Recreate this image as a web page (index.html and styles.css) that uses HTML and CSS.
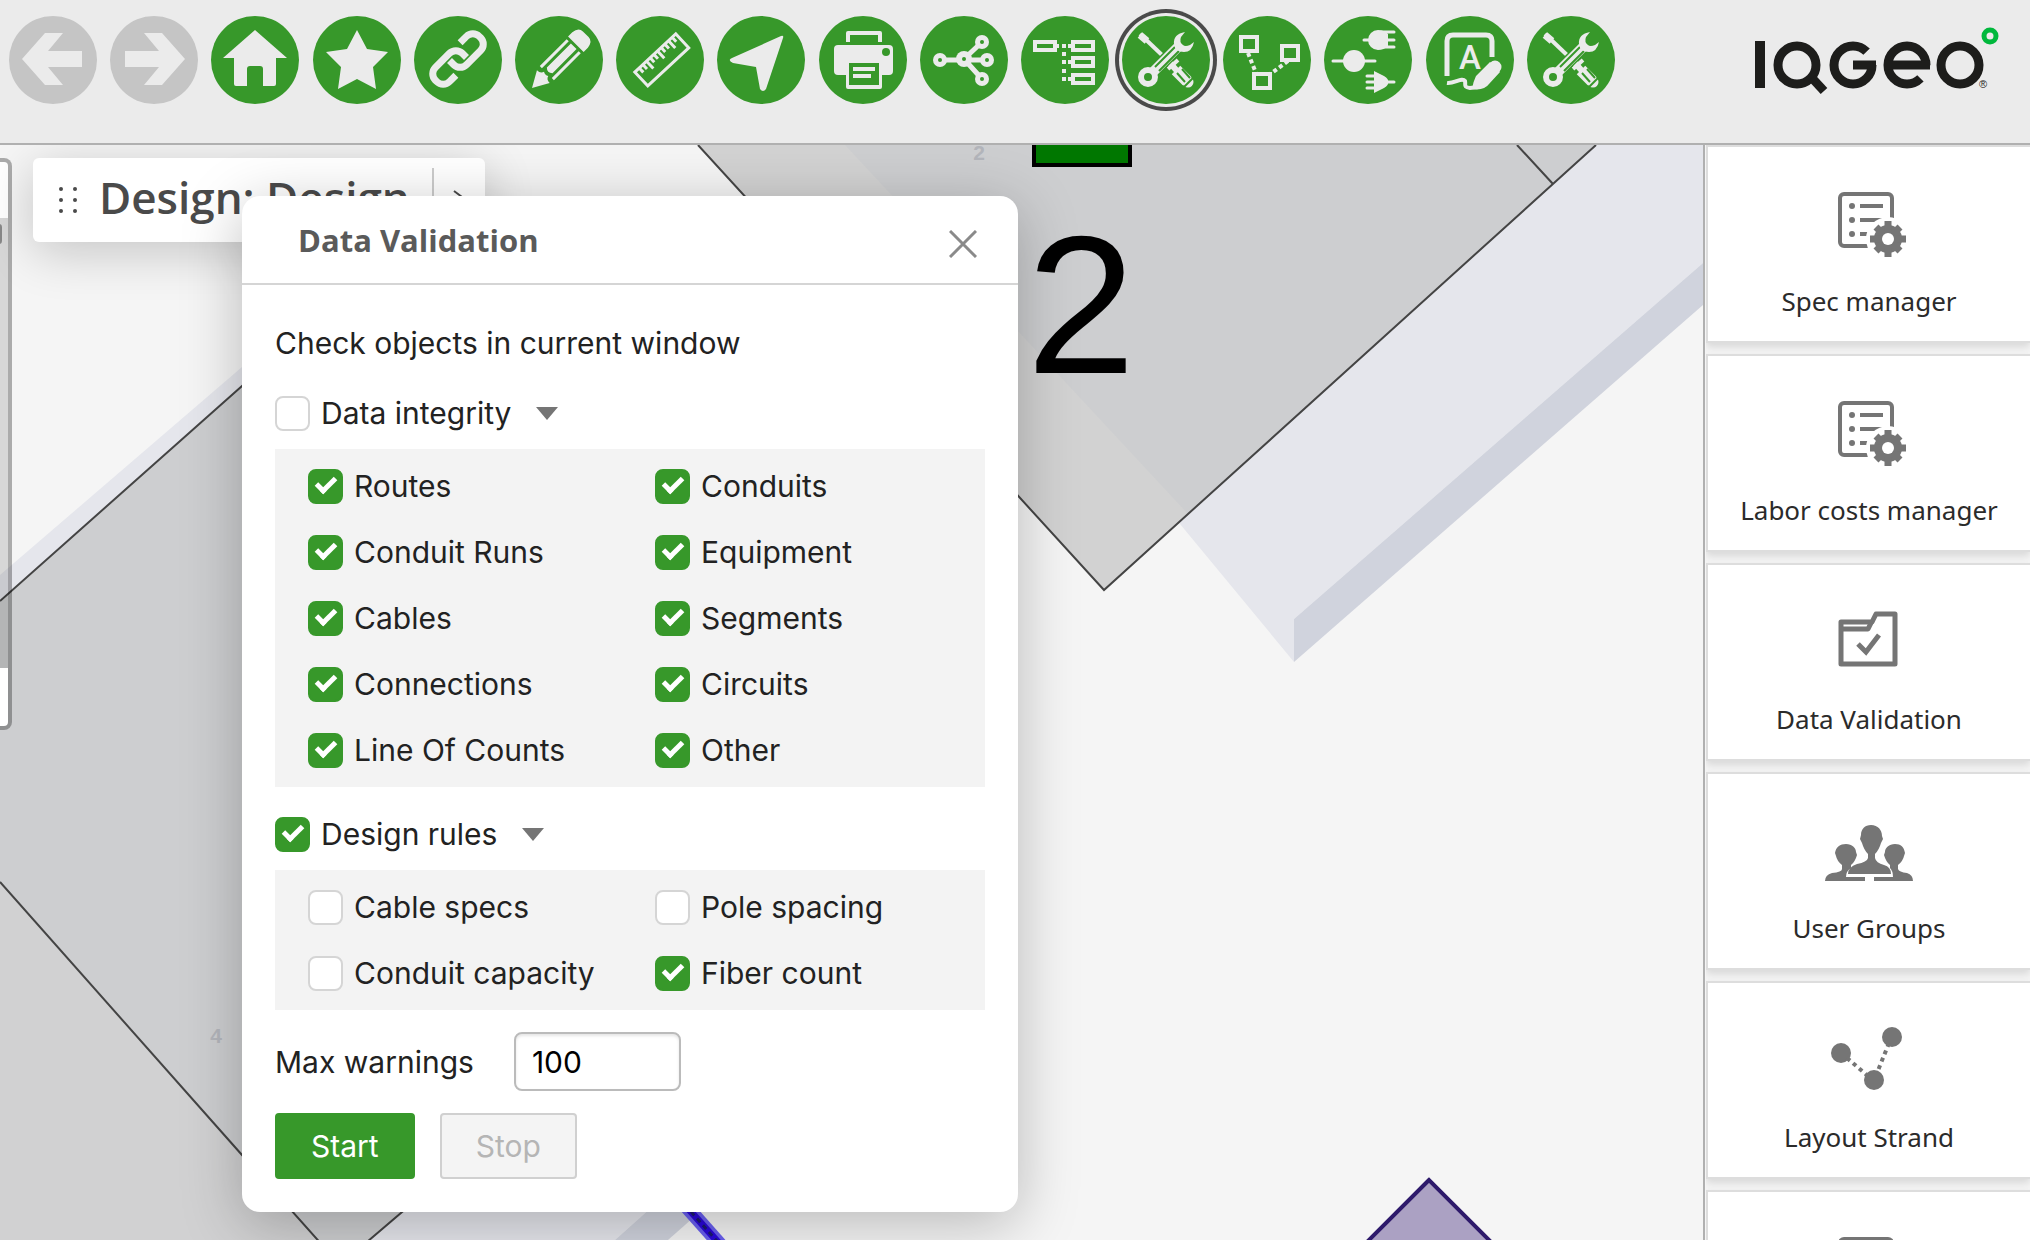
FILE: index.html
```html
<!DOCTYPE html>
<html lang="en">
<head>
<meta charset="utf-8">
<title>IQGeo - Data Validation</title>
<link rel="stylesheet" href="styles.css">
</head>
<body>
<svg class="sprite" aria-hidden="true">
  <symbol id="i-arrow" viewBox="0 0 88 88"><path fill="currentColor" d="M13 43 36 17H54L39 35H73V51H39L54 69H36Z"/></symbol>
  <symbol id="i-tools" viewBox="0 0 88 88">
    <g stroke="currentColor" fill="none">
      <path stroke-width="4" d="M18 18 40 39"/>
      <path stroke-width="7" d="M18 19 25 25"/>
      <path stroke-width="4" d="M46 53 56 44"/>
      <path stroke-width="6" d="M48 47 56 56"/>
      <path stroke-width="12" d="M54 54 65 65"/>
      <path stroke-width="11" stroke-linecap="round" d="M65 65 66 66"/>
    </g>
    <g stroke="var(--green)" fill="none"><path stroke-width="2" d="M55 57 63 66M60 53 68 62"/><path stroke-width="2" d="M62 71 71 62"/><path stroke-width="13" d="M35 52 54 33"/></g>
    <path stroke="currentColor" stroke-width="10" d="M30 57 57 30"/>
    <path stroke="var(--green)" stroke-width="2" d="M33 51 53 31M37 55 57 35"/>
    <circle cx="26" cy="61" r="7" fill="none" stroke="currentColor" stroke-width="6"/>
    <path fill="currentColor" d="M63 16Q51 18 52 28 53 36 62 36 70 36 72 26L68 29Q63 31 61 29 57 26 59 21Z"/>
  </symbol>
  <symbol id="i-spec" viewBox="0 0 90 90">
    <rect x="16" y="19" width="52" height="52" rx="4" fill="none" stroke="currentColor" stroke-width="4"/>
    <g fill="currentColor"><circle cx="28" cy="31" r="3"/><circle cx="28" cy="45" r="3"/><circle cx="28" cy="59" r="3"/><path d="M36 29H59V33H36ZM36 43H59V47H36ZM36 57H59V61H36Z"/></g>
    <circle cx="64" cy="64" r="22" fill="#fff"/>
    <circle cx="64" cy="64" r="14" fill="currentColor"/>
    <path stroke="currentColor" stroke-width="7" d="M64 46V82M46 64H82M52 52 76 76M52 76 76 52"/>
    <circle cx="64" cy="64" r="6" fill="#fff"/>
  </symbol>
</svg>

<header class="topbar">
  <nav class="toolbar" aria-label="Tools">
    <button class="tool" disabled aria-label="Back"><svg><use href="#i-arrow"/></svg></button>
    <button class="tool forward" disabled aria-label="Forward"><svg><use href="#i-arrow"/></svg></button>
    <button class="tool" aria-label="Home"><svg viewBox="0 0 88 88"><path fill="currentColor" d="M44 14 76 42H65V68Q65 70 63 70H52V53Q52 50 49 50H39Q36 50 36 53V70H25Q23 70 23 68V42H12Z"/></svg></button>
    <button class="tool" aria-label="Bookmarks"><svg viewBox="0 0 88 88"><path fill="currentColor" d="M44 14 54 33 75 36 60 51 63 73 44 63 25 73 28 51 13 36 34 33Z"/></svg></button>
    <button class="tool" aria-label="Link"><svg viewBox="0 0 88 88"><g transform="translate(44 43) rotate(-45)" fill="none" stroke="currentColor" stroke-width="7"><path id="chain" d="M13-10H22A9 9 0 0 1 31-1V1A9 9 0 0 1 22 10H2A9 9 0 0 1-7 1V-5"/><use href="#chain" transform="rotate(180)"/></g></svg></button>
    <button class="tool" aria-label="Edit"><svg viewBox="0 0 88 88"><g transform="translate(17 72) rotate(-45)" fill="currentColor"><path d="M0 0 16-9Q16-4 20-3 18 0 20 3 16 4 16 9Z"/><path d="M59-4V4H25Q21 0 25-4ZM21-10H59V-7H21ZM21 7H59V10H21ZM62-11H68Q76-10 76-4V4Q76 10 68 11H62Z"/></g></svg></button>
    <button class="tool" aria-label="Measure"><svg viewBox="0 0 88 88"><g transform="translate(16 56) rotate(-43)" fill="none" stroke="currentColor" stroke-width="3"><rect x="2" y="2" width="56" height="19"/><path d="M8 2V8M13 2V8M18 2V12M23 2V8M28 2V8M33 2V12M38 2V8M43 2V8M48 2V12M53 2V8"/></g></svg></button>
    <button class="tool" aria-label="Locate"><svg viewBox="0 0 88 88"><path fill="currentColor" d="M64 20Q67 19 66 22L49 73Q46 77 43 73L39 51 16 47Q10 44 15 42Z"/></svg></button>
    <button class="tool" aria-label="Print"><svg viewBox="0 0 88 88"><path fill="none" stroke="currentColor" stroke-width="4" stroke-linejoin="round" d="M29 26V17H61V26"/><rect x="15" y="29" width="59" height="30" rx="4" fill="currentColor"/><circle cx="67" cy="36" r="4" fill="var(--green)"/><path fill="currentColor" d="M27 56H63V71Q63 73 61 73H29Q27 73 27 71Z"/><path fill="var(--green)" d="M30 47H60V69H30Z"/><path stroke="currentColor" stroke-width="4" d="M34 53H56M34 60H52"/></svg></button>
    <button class="tool" aria-label="Trace"><svg viewBox="0 0 88 88"><path stroke="currentColor" stroke-width="5" d="M20 44H67M44 43 62 26M44 43 62 63"/><g fill="currentColor"><circle cx="20" cy="44" r="7"/><circle cx="44" cy="43" r="8"/><circle cx="62" cy="26" r="7"/><circle cx="67" cy="44" r="7"/><circle cx="62" cy="63" r="7"/></g><g fill="var(--green)"><circle cx="20" cy="44" r="2"/><circle cx="44" cy="43" r="2"/><circle cx="62" cy="26" r="2"/><circle cx="67" cy="44" r="2"/><circle cx="62" cy="63" r="2"/></g></svg></button>
    <button class="tool" aria-label="Structure"><svg viewBox="0 0 88 88"><path fill="none" stroke="currentColor" stroke-width="4" d="M14 26H34V34H14ZM52 26H72V34H52ZM52 42H72V50H52ZM52 59H72V67H52Z"/><path fill="currentColor" d="M41 28H45V32H41ZM41 36H45V40H41ZM41 44H45V48H41ZM41 53H45V57H41ZM41 61H45V65H41ZM36 28H38V32H36ZM47 28H50V32H47ZM47 44H50V48H47ZM47 61H50V65H47Z"/></svg></button>
    <button class="tool active" aria-label="Admin tools" aria-pressed="true"><svg><use href="#i-tools"/></svg></button>
    <button class="tool" aria-label="Layout"><svg viewBox="0 0 88 88"><path fill="none" stroke="currentColor" stroke-width="4" d="M18 21H34V35H18ZM59 30H75V44H59ZM31 58H47V72H31Z"/><path stroke="currentColor" stroke-width="4" stroke-dasharray="4 3" d="M25 37 33 57M65 45 46 59"/></svg></button>
    <button class="tool" aria-label="Connections"><svg viewBox="0 0 88 88"><g fill="currentColor"><circle cx="30" cy="45" r="11"/><path d="M64 18V30Q60 34 54 34A10 10 0 0 1 54 14Q60 14 64 18ZM50 55 60 60Q65 63 64 66 65 69 60 72L50 77Z"/></g><path fill="none" stroke="currentColor" stroke-width="3" stroke-linecap="round" d="M9 45H51M40 24H70M57 16H70M57 31H70M50 66H70M43 60H51M43 66H51M43 72H51"/></svg></button>
    <button class="tool" aria-label="Annotate"><svg viewBox="0 0 88 88"><g fill="none" stroke="currentColor"><path stroke-width="5" d="M21 60V25Q21 19 27 19H60Q66 19 66 25V41"/><path stroke-width="4" d="M21 67C28 68 36 61 39 65 40 69 37 71 44 72L52 71"/><path stroke-width="13" stroke-linecap="round" d="M69 51 56 64"/></g><path fill="currentColor" d="M64 46 50 60Q47 66 46 73 58 75 63 68L74 56Z"/><text x="44" y="53" text-anchor="middle" class="tool-letter">A</text></svg></button>
    <button class="tool" aria-label="Configuration"><svg><use href="#i-tools"/></svg></button>
  </nav>
  <a class="logo" href="#" aria-label="IQGeo">
    <svg viewBox="0 0 256 84">
      <g fill="none" stroke="#1d1d1b" stroke-width="9">
        <line x1="10" y1="21" x2="10" y2="68" stroke-width="10"/>
        <circle cx="47" cy="45" r="19"/>
        <line x1="62" y1="58" x2="74" y2="71"/>
        <circle cx="103" cy="45" r="19" stroke-dasharray="104 30"/>
        <line x1="103" y1="45" x2="126" y2="45"/>
        <circle cx="157" cy="45" r="19" stroke-dasharray="104 30" transform="rotate(45 157 45)"/>
        <line x1="138" y1="45" x2="180" y2="45"/>
        <circle cx="210" cy="45" r="19"/>
      </g>
      <circle cx="240" cy="16" r="6" fill="none" stroke="#00b83c" stroke-width="5"/>
      <text x="229" y="68" class="logo-mark">®</text>
    </svg>
  </a>
</header>

<main class="workspace">
  <section class="map" aria-label="Map">
    <svg class="map-canvas" viewBox="0 145 1703 1095" preserveAspectRatio="xMinYMin slice">
      <path fill="#e5e6ec" d="M0 575 242 367 300 317V900L900 985 615 1240H0Z"/>
      <path fill="#d0d3dd" d="M615 1240 900 985V1035L668 1240Z"/>
      <path fill="#cdced0" d="M0 601 242 386 400 246V1214L340 1265 242 1155 0 882Z"/>
      <path fill="#cdced0" d="M400 400 600 500V1043L400 1214Z"/>
      <path fill="#d1d1d2" d="M0 882 318 1240H0Z"/>
      <path fill="none" stroke="#444" stroke-width="2" d="M0 601 242 386 400 246M0 882 242 1155 340 1265 600 1043"/>
      <path fill="#e5e6ec" d="M1104 415 1703 60V263L1294 619V662L1180 524Z"/>
      <path fill="#d0d3dd" d="M1294 619 1703 263V305L1294 662Z"/>
      <path fill="#d2d2d2" d="M698 145 1104 590 1596 145Z"/>
      <path fill="#cdced0" d="M845 145 1188 514 1596 145Z"/>
      <path fill="none" stroke="#444" stroke-width="2" d="M698 145 1104 590 1596 145M1517 145 1553 184"/>
      <path fill="#070" stroke="#000" stroke-width="4" d="M1034 140H1130V165H1034Z"/>
      <path fill="none" stroke="#6a60f0" stroke-width="14" d="M685 1205 725 1250"/>
      <path fill="none" stroke="#2a08d8" stroke-width="7" d="M685 1205 725 1250"/>
      <path fill="none" stroke="#1b1b6e" stroke-width="3" stroke-dasharray="5 4" d="M685 1205 725 1250"/>
      <path fill="#aba1c3" stroke="#2e1a6b" stroke-width="4" d="M1429 1180 1360 1249H1498Z"/>
      <text class="map-number" x="1081" y="373" text-anchor="middle">2</text>
      <text class="map-note" x="979" y="160" text-anchor="middle">2</text>
      <text class="map-note" x="216" y="1043" text-anchor="middle">4</text>
    </svg>
    <div class="side-handle"><div class="side-handle-track"><div class="side-handle-tab"></div></div></div>
    <div class="design-bar">
      <svg class="grip" viewBox="0 0 20 28"><g fill="#4a4a4a"><circle cx="3" cy="3" r="2"/><circle cx="17" cy="3" r="2"/><circle cx="3" cy="14" r="2"/><circle cx="17" cy="14" r="2"/><circle cx="3" cy="25" r="2"/><circle cx="17" cy="25" r="2"/></g></svg>
      <h1>Design: Design</h1>
      <button class="expand" aria-label="Expand"><svg viewBox="0 0 16 20"><path fill="none" stroke="#4a4a4a" stroke-width="2" d="M2 1 14 10 2 19"/></svg></button>
    </div>

    <form class="dialog" role="dialog" aria-labelledby="dlg-title">
      <div class="dialog-head">
        <h2 id="dlg-title">Data Validation</h2>
        <button type="button" class="close" aria-label="Close"><svg viewBox="0 0 28 28"><path stroke="#8a8a8a" stroke-width="3" d="M1 1 27 27M27 1 1 27"/></svg></button>
      </div>
      <div class="dialog-body">
        <p class="intro">Check objects in current window</p>
        <div class="group-head">
          <label class="check"><input type="checkbox">Data integrity</label>
          <button type="button" class="caret" aria-label="Toggle data integrity"></button>
        </div>
        <div class="group">
          <label class="check"><input type="checkbox" checked>Routes</label>
          <label class="check"><input type="checkbox" checked>Conduits</label>
          <label class="check"><input type="checkbox" checked>Conduit Runs</label>
          <label class="check"><input type="checkbox" checked>Equipment</label>
          <label class="check"><input type="checkbox" checked>Cables</label>
          <label class="check"><input type="checkbox" checked>Segments</label>
          <label class="check"><input type="checkbox" checked>Connections</label>
          <label class="check"><input type="checkbox" checked>Circuits</label>
          <label class="check"><input type="checkbox" checked>Line Of Counts</label>
          <label class="check"><input type="checkbox" checked>Other</label>
        </div>
        <div class="group-head rules">
          <label class="check"><input type="checkbox" checked>Design rules</label>
          <button type="button" class="caret" aria-label="Toggle design rules"></button>
        </div>
        <div class="group">
          <label class="check"><input type="checkbox">Cable specs</label>
          <label class="check"><input type="checkbox">Pole spacing</label>
          <label class="check"><input type="checkbox">Conduit capacity</label>
          <label class="check"><input type="checkbox" checked>Fiber count</label>
        </div>
        <div class="max">
          <label for="max-warnings">Max warnings</label>
          <input id="max-warnings" type="text" value="100">
        </div>
        <div class="actions">
          <button type="submit" class="btn primary">Start</button>
          <button type="button" class="btn" disabled>Stop</button>
        </div>
      </div>
    </form>
  </section>

  <aside class="sidebar">
    <a class="card" href="#"><svg><use href="#i-spec"/></svg><span>Spec manager</span></a>
    <a class="card" href="#"><svg><use href="#i-spec"/></svg><span>Labor costs manager</span></a>
    <a class="card" href="#"><svg viewBox="0 0 90 90"><g fill="none" stroke="currentColor" stroke-width="5" stroke-linejoin="round"><path d="M17 29H48L52 21H71V71H17Z"/><path d="M17 36H44L48 28"/><path stroke-linejoin="miter" d="M34 51 42 59 55 42"/></g></svg><span>Data Validation</span></a>
    <a class="card" href="#"><svg viewBox="0 0 90 90"><g fill="currentColor"><path d="M47 23C54 23 58 28 58 34L59 37 57 41Q55 48 51 52V56Q52 61 60 63 67 65 67 72H24Q24 65 33 62 43 60 44 56V52Q40 48 38 41L36 37 37 33C37 27 41 23 47 23Z"/><path d="M22 42C28 42 32 46 32 50L33 53Q31 60 27 63V66Q22 69 22 75H41V79H1Q1 73 8 71 18 70 18 67V63Q13 59 12 54L11 51C12 45 16 42 22 42Z"/><path d="M71 42C65 42 61 46 61 50L60 53Q62 60 66 63V66Q69 69 69 75H50V79H89Q89 73 83 71 75 70 74 67V63Q79 59 80 54L81 51C80 45 77 42 71 42Z"/></g></svg><span>User Groups</span></a>
    <a class="card" href="#"><svg viewBox="0 0 90 90"><g fill="currentColor"><circle cx="17" cy="42" r="10"/><circle cx="68" cy="26" r="10"/><circle cx="50" cy="69" r="10"/></g><path stroke="currentColor" stroke-width="4" stroke-dasharray="4 4" d="M23 47 45 66M65 32 53 62"/></svg><span>Layout Strand</span></a>
    <a class="card" href="#" aria-label="Manager"><svg><use href="#i-spec"/></svg></a>
  </aside>
</main>
</body>
</html>
```
FILE: styles.css
```css
:root {
  --green: #37982a;
  --bar: #ebebeb;
  --ink: #222;
  --icon: #757575;
}
* { box-sizing: border-box; }
body {
  margin: 0;
  height: 100vh;
  display: flex;
  flex-direction: column;
  overflow: hidden;
  background: #f5f5f5;
  color: var(--ink);
  font-family: Inter, "Liberation Sans", sans-serif;
  font-size: 30px;
}
button, input { font: inherit; color: inherit; }
button { padding: 0; border: 0; background: none; }
svg { display: block; }
.sprite { position: absolute; width: 0; height: 0; }

.topbar {
  flex: none;
  display: flex;
  align-items: flex-start;
  padding: 16px 24px 39px 9px;
  background: var(--bar);
  border-bottom: 2px solid #b0b0b0;
}
.toolbar {
  flex: 1;
  display: flex;
  justify-content: space-between;
}
.tool {
  width: 88px;
  height: 88px;
  border-radius: 50%;
  background: var(--green);
  color: var(--bar);
}
.tool svg { width: 88px; height: 88px; }
.tool:disabled { background: #c5c5c5; color: var(--bar); }
.forward { transform: scaleX(-1); }
.tool.active { box-shadow: 0 0 0 3px var(--bar), 0 0 0 7px #4a4a4a; }
.tool-letter {
  fill: currentColor;
  font: 500 33px Roboto, sans-serif;
}
.logo { margin: 4px 0 0 135px; }
.logo svg { width: 256px; height: 84px; }
.logo-mark { fill: #1d1d1b; font: 11px "Liberation Sans", sans-serif; }

.workspace {
  flex: 1;
  min-height: 0;
  display: flex;
  gap: 1px;
}
.map {
  flex: 1;
  position: relative;
  overflow: hidden;
  border-right: 2px solid #b0b0b0;
}
.map-canvas {
  position: absolute;
  inset: 0;
  width: 100%;
  height: 100%;
}
.map-number { font: 196px "Liberation Sans", sans-serif; }
.map-note {
  font: bold 21px "Liberation Sans", sans-serif;
  fill: #b3b5bb;
}
.side-handle {
  position: absolute;
  left: -20px;
  top: 13px;
  width: 32px;
  height: 572px;
  padding: 56px 0 58px;
  border: 4px solid rgba(0, 0, 0, .3);
  border-radius: 8px;
  background: linear-gradient(#fff 56px, transparent 56px calc(100% - 58px), #fff calc(100% - 58px));
  background-clip: padding-box;
}
.side-handle-track {
  height: 100%;
  padding-top: 6px;
  background: rgba(0, 0, 0, .12);
}
.side-handle-tab {
  width: 18px;
  height: 20px;
  border: 2px solid #888;
  border-radius: 3px;
}
.design-bar {
  position: absolute;
  left: 33px;
  top: 13px;
  height: 84px;
  padding: 0 17px 0 25px;
  display: flex;
  align-items: center;
  border-radius: 6px;
  background: #fff;
  box-shadow: 0 10px 50px rgba(0, 0, 0, .2);
  color: #4a4a4a;
}
.grip { width: 20px; height: 28px; }
.design-bar h1 {
  margin: 0 22px 6px 21px;
  font: 600 44px/60px "Open Sans", sans-serif;
}
.expand {
  align-self: stretch;
  margin: 10px 0;
  padding: 0 0 0 18px;
  border-left: 2px solid #ccc;
}
.expand svg { width: 16px; height: 20px; }

.dialog {
  position: absolute;
  left: 242px;
  top: 51px;
  width: 776px;
  border-radius: 18px;
  background: #fff;
  box-shadow: 0 12px 60px rgba(0, 0, 0, .25);
}
.dialog-head {
  display: flex;
  justify-content: space-between;
  align-items: center;
  height: 89px;
  padding: 0 41px 0 56px;
  border-bottom: 2px solid #d5d5d5;
}
.dialog-head h2 {
  margin: 0;
  color: #5a5a5a;
  font: bold 31px/44px "Open Sans", sans-serif;
}
.close { margin-top: 9px; }
.close svg { width: 28px; height: 28px; }
.dialog-body { padding: 40px 33px 33px; }
.intro { margin: 0 0 34px; line-height: 36px; }
.group-head {
  display: flex;
  align-items: center;
  gap: 25px;
  margin-bottom: 18px;
}
.group-head.rules { margin-top: 29px; }
.check {
  display: flex;
  align-items: center;
  gap: 11px;
  height: 36px;
}
.check input {
  appearance: none;
  display: grid;
  place-items: center;
  width: 35px;
  height: 35px;
  margin: 0;
  border: 2px solid #d5d5d5;
  border-radius: 8px;
  background: #fff;
}
.check input:checked {
  border-color: var(--green);
  background: var(--green);
}
.check input:checked::before {
  content: "";
  width: 15px;
  height: 7px;
  margin-bottom: 6px;
  border: solid #fff;
  border-width: 0 0 5px 5px;
  transform: rotate(-45deg);
}
.caret {
  border: 11px solid transparent;
  border-top: 13px solid #757575;
  border-bottom: 0;
}
.group {
  display: grid;
  grid-template-columns: 347px 1fr;
  gap: 30px 0;
  padding: 19px 16px 19px 33px;
  background: #f3f3f3;
}
.max {
  display: flex;
  align-items: center;
  gap: 40px;
  margin: 22px 0;
}
.max input {
  width: 167px;
  height: 59px;
  padding: 0 16px;
  border: 2px solid #bbb;
  border-radius: 8px;
  background: #fff;
  box-shadow: inset 0 2px 3px rgba(0, 0, 0, .1);
  color: #000;
}
.actions { display: flex; gap: 25px; }
.btn {
  height: 66px;
  padding: 0 34px;
  border: 2px solid #d0d0d0;
  border-radius: 4px;
  background: #f4f4f4;
}
.btn:disabled { color: #b5b5b5; }
.btn.primary {
  border-color: var(--green);
  background: var(--green);
  color: #fff;
}

.sidebar {
  flex: none;
  width: 324px;
  display: flex;
  flex-direction: column;
  gap: 11px;
  overflow: hidden;
}
.card {
  flex: none;
  height: 198px;
  display: flex;
  flex-direction: column;
  align-items: center;
  gap: 18px;
  padding-top: 28px;
  border: 2px solid #ddd;
  border-right: 0;
  background: #fff;
  box-shadow: 0 4px 8px rgba(0, 0, 0, .12);
  color: #2b2b2b;
  font: 26px/36px "Noto Sans", sans-serif;
  text-decoration: none;
}
.card svg { width: 90px; height: 90px; color: var(--icon); }
```
